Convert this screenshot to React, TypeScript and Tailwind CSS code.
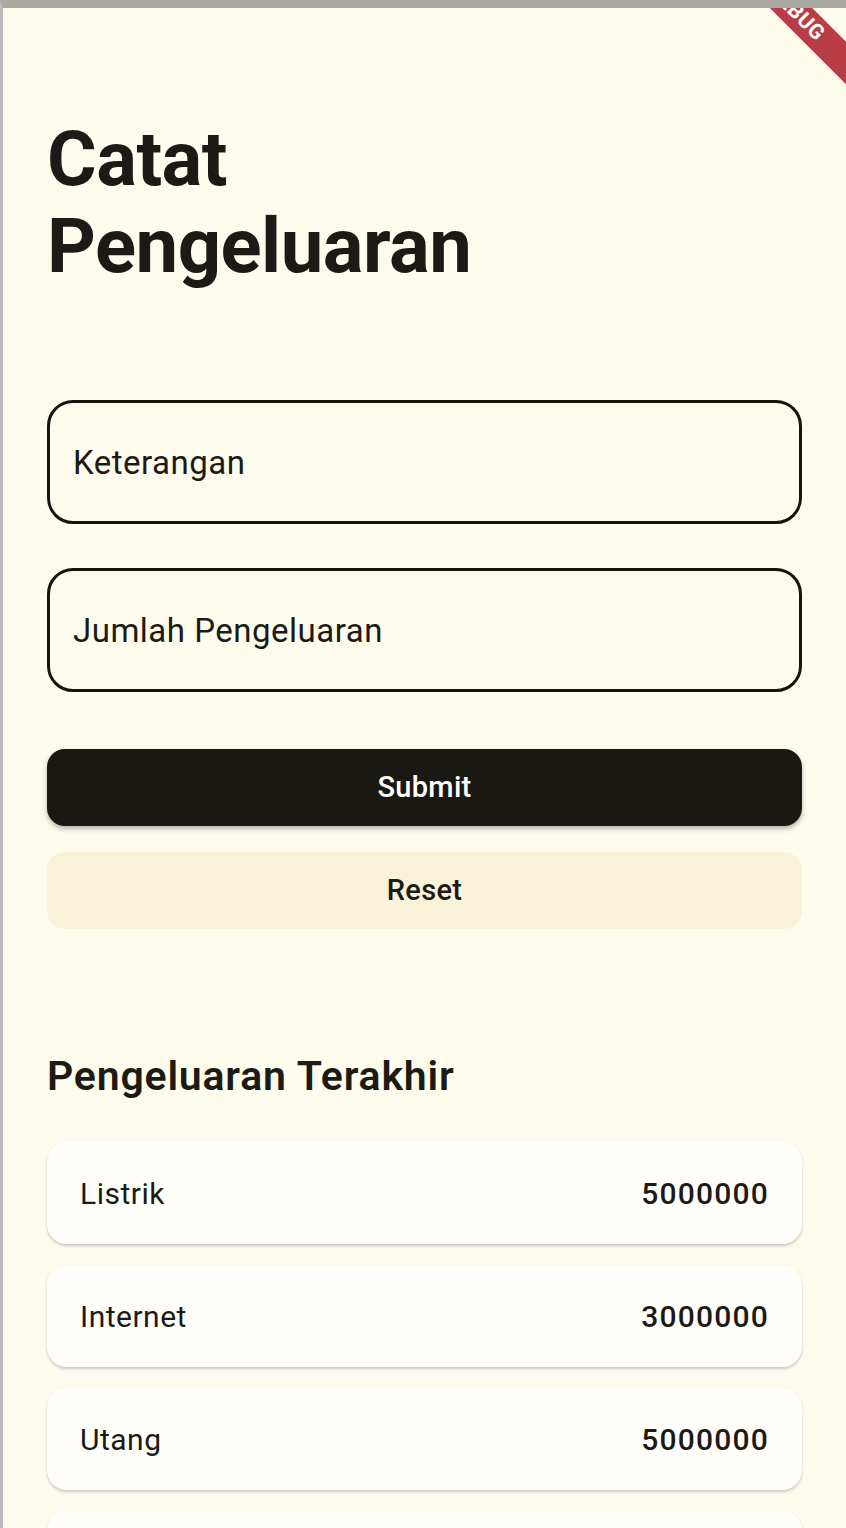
import { useState } from 'react';

type Expense = { label: string; amount: number };

const initialExpenses: Expense[] = [
  { label: 'Listrik', amount: 5000000 },
  { label: 'Internet', amount: 3000000 },
  { label: 'Utang', amount: 5000000 },
  { label: 'Makan', amount: 250000 },
];

const App = () => {
  const [note, setNote] = useState('');
  const [amount, setAmount] = useState('');
  const [expenses, setExpenses] = useState<Expense[]>(initialExpenses);

  const handleSubmit = () => {
    if (!note || !amount) return;
    setExpenses([{ label: note, amount: Number(amount) }, ...expenses]);
    setNote('');
    setAmount('');
  };

  const handleReset = () => {
    setNote('');
    setAmount('');
  };

  return (
    <div
      className="relative h-screen overflow-hidden bg-[#fdfcec] border-t-[8px] border-t-[#aaa9a3] border-l-[3px] border-l-[#bcbbb8] text-[#1c1a14]"
      style={{ fontFamily: 'Roboto, "Noto Sans", sans-serif' }}
    >
      {/* debug ribbon */}
      <div className="pointer-events-none absolute -top-[8px] right-0 h-[130px] w-[130px] overflow-hidden">
        <div className="absolute left-[-30px] top-[-2px] flex h-[30px] w-[220px] rotate-45 items-center justify-center bg-[#b93d45] text-[21px] font-bold tracking-wide text-white">
          DEBUG
        </div>
      </div>

      <div className="flex flex-col px-[44px] pt-[108px]">
        <h1 className="text-[76px] font-bold leading-[87px] tracking-[-0.5px]">
          Catat
          <br />
          Pengeluaran
        </h1>

        <div className="mt-[110px] flex flex-col gap-[44px]">
          <input
            value={note}
            onChange={e => setNote(e.target.value)}
            placeholder="Keterangan"
            className="h-[124px] w-full rounded-[26px] border-[3.5px] border-[#16140f] bg-transparent px-[23px] text-[33px] tracking-[0.5px] text-[#1c1a14] placeholder:text-[#1c1a14] focus:outline-none"
          />
          <input
            value={amount}
            onChange={e => setAmount(e.target.value)}
            placeholder="Jumlah Pengeluaran"
            className="h-[124px] w-full rounded-[26px] border-[3.5px] border-[#16140f] bg-transparent px-[23px] text-[33px] tracking-[0.5px] text-[#1c1a14] placeholder:text-[#1c1a14] focus:outline-none"
          />
        </div>

        <button
          onClick={handleSubmit}
          className="mt-[57px] h-[77px] w-full rounded-[18px] bg-[#1a1812] text-[29px] font-medium tracking-[0.3px] text-white shadow-[0_3px_5px_rgba(0,0,0,0.28)]"
        >
          Submit
        </button>
        <button
          onClick={handleReset}
          className="mt-[26px] h-[77px] w-full rounded-[18px] bg-[#f8f2d9] text-[29px] font-medium tracking-[0.3px] text-[#1c1a14]"
        >
          Reset
        </button>

        <h2 className="mt-[125px] text-[41px] font-semibold leading-[44px] tracking-[0.8px]">Pengeluaran Terakhir</h2>

        <div className="mt-[44px] flex flex-col gap-[21px]">
          {expenses.map((item, i) => (
            <div
              key={i}
              className="flex h-[102px] shrink-0 items-center justify-between rounded-[20px] bg-[#fffefa] px-[33px] shadow-[0_2px_3px_rgba(70,70,110,0.28)]"
            >
              <span className="text-[30px] tracking-[0.5px]">{item.label}</span>
              <span className="text-[30px] font-medium tracking-[1.2px]">{item.amount}</span>
            </div>
          ))}
        </div>
      </div>
    </div>
  );
};

export default App;
